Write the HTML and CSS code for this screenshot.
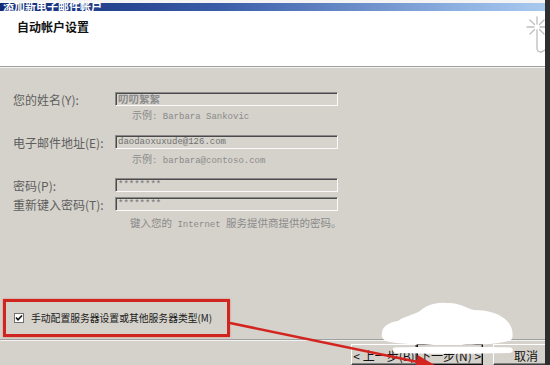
FILE: index.html
```html
<!DOCTYPE html>
<html lang="zh-CN">
<head>
<meta charset="utf-8">
<title>添加新电子邮件帐户</title>
<link rel="stylesheet" href="styles.css">
</head>
<body>
<div class="screen">
  <div class="window">
    <div class="topstrip"></div>
    <div class="titlebar"><span class="title-text">添加新电子邮件帐户</span></div>
    <div class="header">
      <div class="header-title">自动帐户设置</div>
      <svg class="header-icon" width="20" height="40" viewBox="0 0 20 40">
        <g stroke="#bdbdbd" stroke-width="1.3" fill="none" stroke-linecap="round">
          <line x1="12" y1="2" x2="12" y2="9"/>
          <line x1="12" y1="15" x2="12" y2="21"/>
          <line x1="2" y1="12" x2="9" y2="12"/>
          <line x1="15" y1="12" x2="21" y2="12"/>
          <line x1="5" y1="5" x2="9.5" y2="9.5"/>
          <line x1="14.5" y1="14.5" x2="19" y2="19"/>
          <line x1="19" y1="5" x2="14.5" y2="9.5"/>
          <line x1="5" y1="19" x2="9.5" y2="14.5"/>
          <path d="M12 22 L12 33 Q12 37 16 37 L20 35"/>
        </g>
      </svg>
    </div>
    <div class="sep"></div>
    <div class="body">
      <div class="form">
        <div class="row row-name">
          <span class="lbl">您的姓名(Y):</span>
          <div class="field"><span class="val val-cjk">叨叨絮絮</span></div>
        </div>
        <div class="hint hint-name"><span class="cjk">示例</span>: Barbara Sankovic</div>
        <div class="row row-mail">
          <span class="lbl">电子邮件地址(E):</span>
          <div class="field"><span class="val">daodaoxuxude@126.com</span></div>
        </div>
        <div class="hint hint-mail"><span class="cjk">示例</span>: barbara@contoso.com</div>
        <div class="row row-pass">
          <span class="lbl">密码(P):</span>
          <div class="field"><span class="val">********</span></div>
        </div>
        <div class="row row-repass">
          <span class="lbl">重新键入密码(T):</span>
          <div class="field"><span class="val">********</span></div>
        </div>
        <div class="hint note"><span class="cjk">键入您的</span> Internet <span class="cjk">服务提供商提供的密码。</span></div>
      </div>
      <div class="manual">
        <span class="checkbox">
          <svg width="8" height="8" viewBox="0 0 8 8"><path d="M1 3.5 L3 5.8 L7 1.5" stroke="#111" stroke-width="1.6" fill="none"/></svg>
        </span>
        <span class="manual-text">手动配置服务器设置或其他服务器类型(M)</span>
      </div>
    </div>
    <div class="sep"></div>
    <div class="buttons">
      <div class="btn btn-back">&lt; 上一步(B)</div>
      <div class="btn btn-next">下一步(N) &gt;</div>
      <div class="btn btn-cancel">取消</div>
    </div>
  </div>
  <div class="edge"></div>
  <svg class="overlay" width="550" height="365" viewBox="0 0 550 365">
    <g fill="#ffffff" class="blot">
      <path d="M382 333 C382 326 390 322 398 321 C404 316 414 315 420 311 C426 306 434 302 446 303 C458 302 466 308 474 310 C486 310 498 313 505 319 C511 324 514 331 512 339 C506 344 480 345 450 345 C420 345 396 344 386 341 C382 339 381 336 382 333 Z"/>
      <path d="M394 347.5 C430 346.5 480 346.5 511 347.5 C514 349.5 513 352 510 353 C470 354 430 354 396 353 C392 352 392 349 394 347.5 Z"/>
    </g>
    <line x1="230" y1="323" x2="418" y2="362" stroke="#d42420" stroke-width="2.6"/>
    <polygon points="438,367 417.7,355 415.1,370" fill="#d42420"/>
  </svg>
</div>
</body>
</html>
```

FILE: styles.css
```css
html, body {
  margin: 0;
  padding: 0;
  background: #d4d0c8;
}

.screen {
  position: relative;
  width: 550px;
  height: 365px;
  overflow: hidden;
  display: flex;
  font-family: "Noto Sans CJK SC", "Liberation Sans", sans-serif;
}

.window {
  width: 545px;
  height: 365px;
  flex-shrink: 0;
  display: flex;
  flex-direction: column;
  background: #d5d2cb;
}

.edge {
  width: 5px;
  height: 365px;
  flex-shrink: 0;
  background: #2e2e2e;
  position: relative;
}

.topstrip {
  height: 3px;
  background: #f4f4f4;
}

.titlebar {
  height: 8px;
  background: linear-gradient(to right, #102a74 0%, #3a5ca8 40%, #8fb2e2 85%, #a9c9ee 100%);
  color: #ffffff;
  font-size: 11px;
  font-weight: 700;
  line-height: 6px;
  padding-left: 3px;
  white-space: nowrap;
}

.header {
  height: 56px;
  background: #ffffff;
  display: flex;
  justify-content: space-between;
  align-items: flex-start;
}

.header-title {
  margin: 8px 0 0 17px;
  font-size: 12px;
  font-weight: 700;
  color: #111111;
  line-height: 16px;
}

.header-icon {
  margin-top: 4px;
  display: block;
}

.sep {
  height: 1px;
  background: #a0a0a0;
  border-bottom: 1px solid #f2f2f2;
}

.body {
  height: 275px;
  display: flex;
  flex-direction: column;
}

.form {
  padding: 24px 0 0 13px;
  display: flex;
  flex-direction: column;
}

.row {
  display: flex;
  align-items: center;
  height: 14px;
}

.lbl {
  width: 102px;
  font-size: 12px;
  color: #5e5e5e;
  line-height: 14px;
  position: relative;
  top: 1px;
  white-space: nowrap;
}

.field {
  width: 220px;
  height: 12px;
  border-top: 1px solid #8a8a8a;
  border-left: 1px solid #8a8a8a;
  border-right: 1px solid #fafafa;
  border-bottom: 1px solid #fafafa;
  box-shadow: inset 1px 1px 0 #4a4a4a;
  background: #d7d4cd;
  display: flex;
  align-items: center;
  padding-left: 1px;
  overflow: hidden;
}

.val {
  font-family: "Liberation Mono", monospace;
  font-size: 9px;
  color: #707070;
  line-height: 12px;
  padding-left: 1px;
  white-space: nowrap;
}

.val-cjk {
  font-family: "Noto Sans CJK SC", sans-serif;
  font-size: 10.5px;
  font-weight: 700;
  color: #8c8c8c;
}

.hint {
  font-family: "Liberation Mono", monospace;
  font-size: 9px;
  color: #8a8a8a;
  line-height: 12px;
  margin-left: 119px;
  white-space: nowrap;
}

.cjk {
  font-family: "Noto Sans CJK SC", sans-serif;
  font-size: 10px;
}

.hint-name { margin-top: 3px; }
.row-mail { margin-top: 12px; }
.hint-mail { margin-top: 4px; }
.row-pass { margin-top: 11px; }
.row-repass { margin-top: 5px; }
.note {
  margin-top: 6px;
  margin-left: 117px;
}
.note .cjk { font-size: 10.5px; }

.manual {
  box-sizing: border-box;
  margin-top: auto;
  margin-bottom: 2px;
  margin-left: 3px;
  width: 227px;
  height: 38px;
  border: 3px solid #d0241f;
  box-shadow: 0 0 2px rgba(220, 60, 50, 0.5);
  display: flex;
  align-items: center;
  padding-left: 8px;
  gap: 7px;
}

.checkbox {
  width: 8px;
  height: 8px;
  background: #ffffff;
  border: 1px solid #707070;
  display: flex;
  align-items: center;
  justify-content: center;
}

.checkbox svg { display: block; }

.manual-text {
  font-size: 9.8px;
  color: #1a1a1a;
  line-height: 14px;
  white-space: nowrap;
}

.buttons {
  flex: 1;
  display: flex;
  padding: 3px 0 0 351px;
}

.btn {
  flex-shrink: 0;
  height: 21px;
  box-sizing: border-box;
  background: #d5d2cb;
  border-top: 1px solid #ffffff;
  border-left: 1px solid #ffffff;
  border-right: 1px solid #404040;
  border-bottom: 1px solid #404040;
  box-shadow: inset -1px -1px 0 #808080;
  font-size: 12px;
  color: #111111;
  line-height: 21px;
  text-align: center;
  white-space: nowrap;
}

.btn-back { width: 66px; }

.btn-next {
  width: 66px;
  outline: 1px solid #111111;
  outline-offset: -1px;
}

.btn-cancel {
  width: 66px;
  margin-left: 10px;
}

.overlay {
  position: absolute;
  left: 0;
  top: 0;
  pointer-events: none;
}

.blot {
  filter: blur(0.6px);
}
```
